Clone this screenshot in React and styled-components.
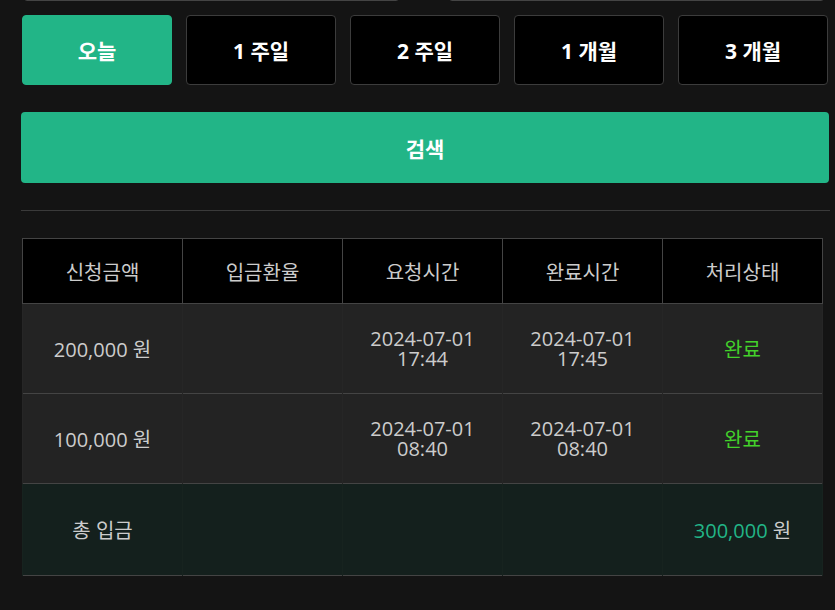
import React from 'react';
import styled, { createGlobalStyle } from 'styled-components';

const GlobalStyle = createGlobalStyle`
  html, body {
    margin: 0;
    padding: 0;
    background: #141414;
    font-family: 'Open Sans', 'Noto Sans CJK KR', sans-serif;
    color: #cccccc;
  }
`;

const periods = ['오늘', '1 주일', '2 주일', '1 개월', '3 개월'];

const rows = [
  { amount: '200,000 원', rate: '', requested: ['2024-07-01', '17:44'], done: ['2024-07-01', '17:45'], status: '완료' },
  { amount: '100,000 원', rate: '', requested: ['2024-07-01', '08:40'], done: ['2024-07-01', '08:40'], status: '완료' },
];

const App = () => {
  return (
    <>
      <GlobalStyle />
      <Page>
        <DateRow>
          <DateBox />
          <DateBox />
        </DateRow>

        <PeriodRow>
          {periods.map((p, i) => (
            <PeriodButton key={p} active={i === 0}>{p}</PeriodButton>
          ))}
        </PeriodRow>

        <SearchButton>검색</SearchButton>

        <Divider />

        <Table>
          <thead>
            <tr>
              <HeadCell>신청금액</HeadCell>
              <HeadCell>입금환율</HeadCell>
              <HeadCell>요청시간</HeadCell>
              <HeadCell>완료시간</HeadCell>
              <HeadCell>처리상태</HeadCell>
            </tr>
          </thead>
          <tbody>
            {rows.map((r, i) => (
              <BodyRow key={i}>
                <Cell>{r.amount}</Cell>
                <Cell>{r.rate}</Cell>
                <Cell><Stamp>{r.requested[0]}<br />{r.requested[1]}</Stamp></Cell>
                <Cell><Stamp>{r.done[0]}<br />{r.done[1]}</Stamp></Cell>
                <Cell><Status>{r.status}</Status></Cell>
              </BodyRow>
            ))}
            <TotalRow>
              <Cell tall>총 입금</Cell>
              <Cell tall />
              <Cell tall />
              <Cell tall />
              <Cell tall><Total>300,000</Total> 원</Cell>
            </TotalRow>
          </tbody>
        </Table>
      </Page>
    </>
  );
};

const Page = styled.div`
  width: 808px;
  margin-left: 21px;
  margin-top: -43px;
  padding-bottom: 40px;
`;

const DateRow = styled.div`
  display: flex;
  justify-content: space-between;
  padding: 0 5px 0 3px;
`;

const DateBox = styled.div`
  width: 373px;
  height: 42px;
  border: 1px solid #444444;
  border-radius: 3px;
  background: #000;
`;

const PeriodRow = styled.div`
  display: flex;
  gap: 14px;
  margin-top: 14px;
  padding-left: 1px;
`;

const PeriodButton = styled.button`
  width: 150px;
  height: 70px;
  border-radius: 4px;
  border: 1px solid ${(p) => (p.active ? '#22b587' : '#3c3c3c')};
  background: ${(p) => (p.active ? '#22b587' : '#000000')};
  color: #ffffff;
  font-family: inherit;
  font-size: 21px;
  font-weight: 700;
  cursor: pointer;
`;

const SearchButton = styled.button`
  display: block;
  width: 808px;
  height: 71px;
  margin-top: 27px;
  border: none;
  border-radius: 4px;
  background: #22b587;
  color: #ffffff;
  font-family: inherit;
  font-size: 21px;
  font-weight: 700;
`;

const Divider = styled.hr`
  margin: 27px 0 0 0;
  border: none;
  border-top: 1px solid #3a3a3a;
  width: 809px;
`;

const Table = styled.table`
  width: 801px;
  margin-top: 27px;
  margin-left: 1px;
  border-collapse: collapse;
  table-layout: fixed;
  border: 1px solid #444444;
`;

const HeadCell = styled.th`
  height: 62px;
  background: #000000;
  border: 1px solid #444444;
  color: #cccccc;
  font-size: 20px;
  font-weight: 400;
  text-align: center;
`;

const BodyRow = styled.tr`
  background: #232323;
  border-bottom: 1px solid #444444;
`;

const TotalRow = styled.tr`
  background: #14201d;
`;

const Cell = styled.td`
  height: ${(p) => (p.tall ? '91px' : '89px')};
  padding: 0;
  text-align: center;
  font-size: 20px;
  color: #cccccc;
  border-left: 1px solid ${(p) => (p.tall ? '#17231f' : '#262626')};
  border-right: 1px solid ${(p) => (p.tall ? '#17231f' : '#262626')};
`;

const Stamp = styled.div`
  line-height: 20px;
`;

const Status = styled.span`
  color: #43d12b;
`;

const Total = styled.span`
  color: #22b587;
`;

export default App;
